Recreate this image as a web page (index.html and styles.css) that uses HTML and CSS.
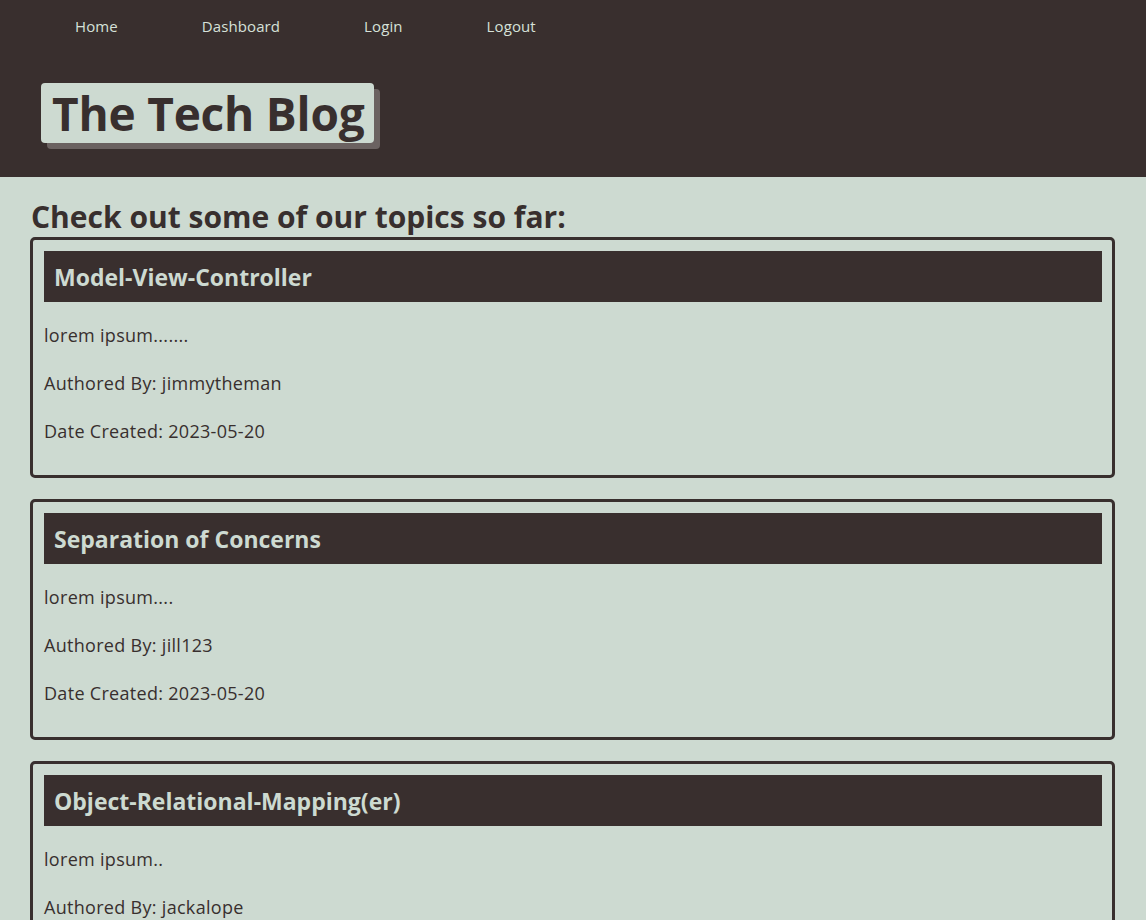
FILE: index.html
```html
<!DOCTYPE html>
<html lang="en">
<head>
<meta charset="utf-8">
<title>The Tech Blog</title>
<link rel="stylesheet" href="styles.css">
</head>
<body>
<header class="site-header">
  <nav class="nav">
    <a class="nav-link" href="#">Home</a>
    <a class="nav-link" href="#">Dashboard</a>
    <a class="nav-link" href="#">Login</a>
    <a class="nav-link" href="#">Logout</a>
  </nav>
  <div class="brand-wrap">
    <h1 class="brand">The Tech Blog</h1>
  </div>
</header>
<main class="main">
  <h2 class="intro">Check out some of our topics so far:</h2>
  <section class="card">
    <h3 class="card-title">Model-View-Controller</h3>
    <p class="card-text">lorem ipsum.......</p>
    <p class="card-text">Authored By: jimmytheman</p>
    <p class="card-text">Date Created: 2023-05-20</p>
  </section>
  <section class="card">
    <h3 class="card-title">Separation of Concerns</h3>
    <p class="card-text">lorem ipsum....</p>
    <p class="card-text">Authored By: jill123</p>
    <p class="card-text">Date Created: 2023-05-20</p>
  </section>
  <section class="card">
    <h3 class="card-title">Object-Relational-Mapping(er)</h3>
    <p class="card-text">lorem ipsum..</p>
    <p class="card-text">Authored By: jackalope</p>
    <p class="card-text">Date Created: 2023-05-20</p>
  </section>
</main>
</body>
</html>
```
FILE: styles.css
```css
* { box-sizing: border-box; }
html, body {
  margin: 0;
  padding: 0;
  background: #cddad1;
  color: #382f2e;
  font-family: "Open Sans", "Noto Sans", sans-serif;
}
.site-header {
  background: #392f2e;
  height: 177px;
  display: flex;
  flex-direction: column;
}
.nav {
  display: flex;
  gap: 84px;
  padding: 15px 0 0 75px;
  height: 83px;
}
.nav-link {
  color: #d6e1d9;
  text-decoration: none;
  font-size: 15px;
  line-height: 22px;
  letter-spacing: 0.1px;
}
.brand-wrap {
  padding-left: 41px;
}
.brand {
  display: inline-block;
  margin: 0;
  background: #cddad1;
  color: #382f2e;
  font-size: 46px;
  font-weight: 700;
  line-height: 60px;
  height: 60px;
  padding: 0 10px 0 11px;
  border-radius: 4px;
  box-shadow: 6px 6px 0 #6b6261;
  letter-spacing: -0.2px;
}
.main {
  padding: 20px 31px 20px 30px;
}
.intro {
  margin: 0 0 0 1px;
  font-size: 30px;
  line-height: 40px;
  font-weight: 700;
}
.card {
  border: 3px solid #382f2e;
  border-radius: 5px;
  padding: 11px 10px 11px 11px;
  margin-bottom: 21px;
}
.card-title {
  margin: 0;
  background: #392f2e;
  color: #cddad1;
  font-size: 23px;
  font-weight: 700;
  line-height: 51px;
  height: 51px;
  padding: 1px 10px 0;
}
.card-text {
  margin: 18px 0;
  font-size: 18px;
  line-height: 30px;
  letter-spacing: 0.3px;
}
```
